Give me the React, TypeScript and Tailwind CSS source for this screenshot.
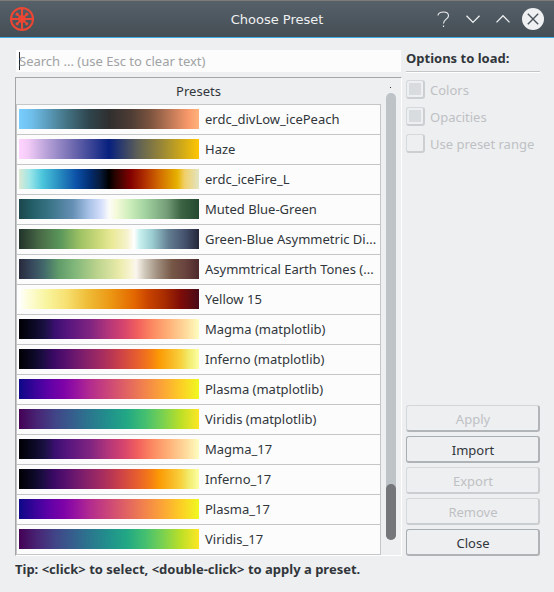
import React from "react";

type Preset = { name: string; stops: string };

const magma =
  "#000004, #0b0924 8%, #1d1147 15%, #3b0f70 20%, #57157e 27%, #812581 40%, #b5367a 50%, #d5446d 58%, #f1605d 66%, #fc8961 74%, #feb078 83%, #fed799 92%, #fcfdbf";
const inferno =
  "#000004, #0c0826 8%, #1b0c41 13%, #390963 19%, #57106e 26%, #781c6d 34%, #a52c60 46%, #cb4149 56%, #e55c30 65%, #f57d15 73%, #fb9b06 78%, #f7d13d 90%, #f2ea69 94%, #fcffa4";
const plasma =
  "#0d0887, #3a049a 9%, #5c01a6 16%, #7e03a8 25%, #9814a0 32%, #b12a90 39%, #cc4778 50%, #e16462 60%, #f2844b 70%, #fca636 80%, #fcce25 90%, #f0f921";
const viridis =
  "#440154, #482475 10%, #414487 20%, #355f8d 30%, #2a788e 40%, #21918c 50%, #22a884 60%, #44bf70 70%, #7ad151 80%, #bddf26 90%, #fde725";

const presets: Preset[] = [
  { name: "erdc_divLow_icePeach", stops: "#78ceff, #70bfeb 7%, #427181 27%, #2f454d 39%, #302f2f 50%, #4d3c34 62%, #7c543f 73%, #bd7756 84%, #f8996a 94%, #ffb27c" },
  { name: "Haze", stops: "#ffd3ff, #f3cbf7 5%, #b9a3d9 15%, #6462aa 32%, #07207e 50%, #5e6056 66%, #a58f30 82%, #ffc600" },
  { name: "erdc_iceFire_L", stops: "#dce9d3, #9ce6e8 6%, #4bc5dc 13%, #2c95c4 21%, #0c50a7 32%, #022b6d 40%, #071b3c 45%, #000000 50%, #2f0400 54%, #820100 62%, #b13000 70%, #d16b00 78%, #e7b200 88%, #f1cf68 92%, #e2e5c3" },
  { name: "Muted Blue-Green", stops: "#1c464c, #246069 8%, #397487 17%, #6690b5 30%, #a9c2e7 39%, #d7e0fc 46%, #fbfcf8 50%, #f5fad9 54%, #caecb9 62%, #a3d3a1 70%, #759e78 82%, #3d6444 90%, #244930" },
  { name: "Green-Blue Asymmetric Di...", stops: "#21332b, #4a6c47 12%, #5b975b 23%, #9ec264 34%, #cbd97a 44%, #ebea99 52%, #f5f2cc 60%, #ffffff 64%, #c8f0ee 67%, #9bcdd2 74%, #637e91 83%, #45526e 92%, #25273a" },
  { name: "Asymmtrical Earth Tones (...", stops: "#272a3b, #37475c 7%, #426a6b 14%, #609b69 22%, #81b77a 31%, #b9d28c 43%, #ebebab 56%, #f7f4d3 62%, #fbf6ee 65%, #cec7b9 70%, #a08e7e 77%, #765746 85%, #6a443f 92%, #4c292b" },
  { name: "Yellow 15", stops: "#ffffff, #fdfdda 5%, #f8f5a0 15%, #f7e173 26%, #efbd38 38%, #ec9713 51%, #e36700 64%, #c84300 72%, #a82c00 81%, #7d0c08 90%, #480b18" },
  { name: "Magma (matplotlib)", stops: magma },
  { name: "Inferno (matplotlib)", stops: inferno },
  { name: "Plasma (matplotlib)", stops: plasma },
  { name: "Viridis (matplotlib)", stops: viridis },
  { name: "Magma_17", stops: magma },
  { name: "Inferno_17", stops: inferno },
  { name: "Plasma_17", stops: plasma },
  { name: "Viridis_17", stops: viridis },
];

function AppLogo() {
  return (
    <svg width="24" height="24" viewBox="0 0 24 24" fill="none" stroke="#ed4733">
      <circle cx="12" cy="12" r="11" strokeWidth="2" />
      <path d="M12 1v22M1 12h22" strokeWidth="2" />
      <path d="M7 7l10 10M17 7L7 17" strokeWidth="1.3" />
      <rect x="8.5" y="8.5" width="7" height="7" fill="#ed4733" stroke="none" />
      <g fill="#ed4733" stroke="none">
        <circle cx="7.2" cy="7.2" r="1.6" />
        <circle cx="16.8" cy="7.2" r="1.6" />
        <circle cx="7.2" cy="16.8" r="1.6" />
        <circle cx="16.8" cy="16.8" r="1.6" />
      </g>
    </svg>
  );
}

function TitleBar() {
  return (
    <header className="flex h-[38px] items-center border-t border-b border-t-[#7c7b78] border-b-[#3daee9] bg-linear-to-b from-[#566069] to-[#454e55] pl-[10px] pr-[10px]">
      <AppLogo />
      <h1 className="flex-1 pl-[86px] text-center font-['DejaVu_Sans',sans-serif] text-[13px] leading-none text-[#eff0f1]">
        Choose Preset
      </h1>
      <svg className="shrink-0" width="110" height="24" viewBox="0 0 110 24" fill="none" stroke="#eff0f1">
        <path d="M4 8.5C4 3.8 14.5 3.8 14.5 8.7c0 3.5-5 3.5-5 7.8" strokeWidth="1.1" />
        <path d="M9.5 18.5v1.5" strokeWidth="1.2" />
        <path d="M32.5 8.8l6.5 6.6 6.5-6.6M62.5 15.4l6.5-6.6 6.5 6.6" strokeWidth="1.3" />
        <circle cx="99" cy="12" r="11" fill="#eff0f1" stroke="none" />
        <path d="M93.8 6.8l10.4 10.4M104.2 6.8l-10.4 10.4" stroke="#4b545b" strokeWidth="1.4" />
      </svg>
    </header>
  );
}

function Option({ label, checked }: { label: string; checked?: boolean }) {
  return (
    <label className="flex h-[27px] items-center gap-[5px] text-[#bec1c4]">
      <span className="flex size-[19px] items-center justify-center rounded-[3px] border border-r-2 border-b-2 border-[#d6d9db] border-r-[#cccfd1] border-b-[#cccfd1]">
        {checked && <span className="size-3 bg-[#d8dcdf]" />}
      </span>
      {label}
    </label>
  );
}

function ActionButton({ label, disabled, strong }: { label: string; disabled?: boolean; strong?: boolean }) {
  const tone = disabled
    ? strong
      ? "border-[#d3d7da] border-r-[#b2b5b8] border-b-[#b2b5b8] text-[#bec1c4]"
      : "border-[#d6d9dc] border-r-[#cbced0] border-b-[#cbced0] text-[#bec1c4]"
    : "border-[#a9aeb2] border-r-[#b0b3b6] border-b-[#b0b3b6] text-[#31363b]";
  return (
    <button className={`h-[27px] rounded-[3px] border border-r-2 border-b-2 pt-[3px] pl-px leading-none ${tone}`} disabled={disabled}>
      {label}
    </button>
  );
}

export default function App() {
  return (
    <div className="h-[592px] w-[554px] overflow-hidden bg-[#eeeff1] font-['Noto_Sans',sans-serif] text-[13px] leading-[18px] text-[#31363b]">
      <TitleBar />
      <main className="flex h-[518px] pt-3 pl-[15px]">
        <section className="w-[387px]">
          <div className="ml-px flex h-[22px] w-[385px] items-center bg-[#fcfcfc] pl-[3px]">
            <span className="h-[18px] w-px bg-[#232629]" />
            <span className="-ml-px whitespace-nowrap text-[#a0a2a4]">Search ... (use Esc to clear text)</span>
          </div>
          <div className="mt-[5px] flex h-[479px] border border-t-[#a2a6a9] border-r-white border-b-white border-l-[#a2a6a9]">
            <div className="w-[365px]">
              <div className="flex h-[26px] items-center justify-center">Presets</div>
              <div className="border-t border-r border-l border-[#c4c6c8]">
                {presets.map((preset) => (
                  <div key={preset.name} className="flex h-[30px] items-center border-b border-[#c4c6c8] bg-[#fcfcfc] pb-px pl-[2px]">
                    <div className="h-5 w-[180px] shrink-0" style={{ background: `linear-gradient(to right, ${preset.stops})` }} />
                    <span className="pl-[6px] whitespace-nowrap">{preset.name}</span>
                  </div>
                ))}
              </div>
            </div>
            <div className="flex flex-1 flex-col items-start pl-[5px]">
              <span className="mt-[9px] ml-[4px] size-px bg-[#31363b]" />
              <div className="mt-[5px] flex h-[447px] w-[10px] flex-col justify-end rounded-full bg-[#bdc3c7]">
                <div className="h-14 rounded-full bg-[#75767a]" />
              </div>
            </div>
          </div>
        </section>
        <aside className="ml-1 flex h-[506px] w-[134px] flex-col">
          <h2 className="h-[21px] font-bold leading-[17px] whitespace-nowrap">Options to load:</h2>
          <div className="h-[2px] border-t border-b border-t-[#c3c5c7] border-b-white" />
          <div className="mt-[3px]">
            <Option label="Colors" checked />
            <Option label="Opacities" checked />
            <Option label="Use preset range" />
          </div>
          <div className="mt-auto flex flex-col gap-1">
            <ActionButton label="Apply" disabled strong />
            <ActionButton label="Import" />
            <ActionButton label="Export" disabled />
            <ActionButton label="Remove" disabled />
            <ActionButton label="Close" />
          </div>
        </aside>
      </main>
      <p className="pt-[4px] pl-[15px] font-bold">Tip: &lt;click&gt; to select, &lt;double-click&gt; to apply a preset.</p>
    </div>
  );
}
